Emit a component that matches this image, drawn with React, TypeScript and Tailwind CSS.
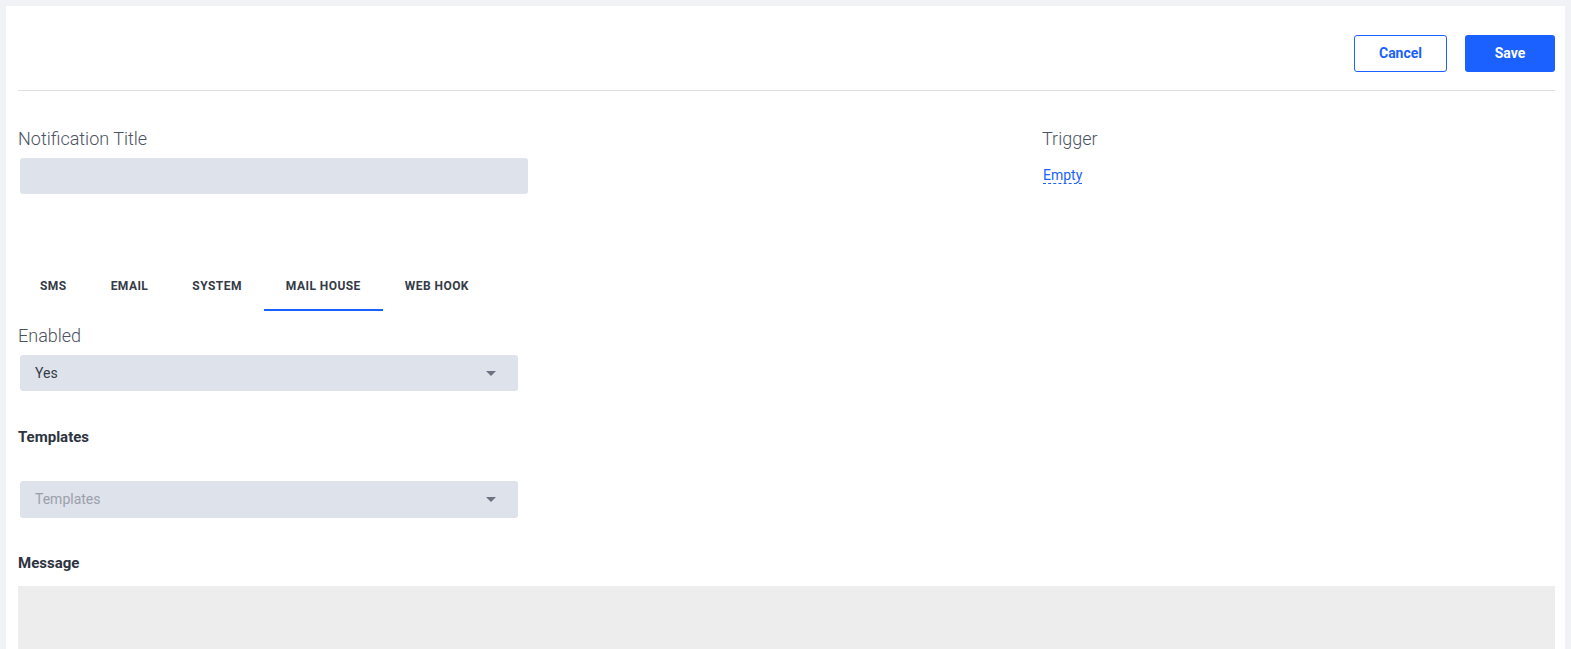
import { useState } from 'react';

const tabs = ['SMS', 'EMAIL', 'SYSTEM', 'MAIL HOUSE', 'WEB HOOK'];

function Caret() {
  return (
    <svg width="10" height="5" viewBox="0 0 10 5" className="shrink-0">
      <path d="M0 0h10L5 5z" fill="#6b7280" />
    </svg>
  );
}

export default function App() {
  const [active, setActive] = useState('MAIL HOUSE');

  return (
    <div className="min-h-screen bg-[#f1f2f5] px-[6px] pt-[6px] font-['Roboto',sans-serif]">
      <div className="bg-white pl-[12px] pr-[10px] min-h-[643px]">
        {/* Header actions */}
        <div className="flex justify-end gap-[18px] pt-[29px] pb-[18px] border-b border-[#dcdfe4]">
          <button className="w-[93px] h-[37px] rounded-[3px] border border-[#1b61ff] text-[#1b61ff] text-[14px] font-bold">
            Cancel
          </button>
          <button className="w-[90px] h-[37px] rounded-[3px] bg-[#1b61ff] text-white text-[14px] font-bold">
            Save
          </button>
        </div>

        <div className="flex">
          <div className="w-[1024px]">
            <div className="mt-[36px] text-[18px] leading-[24px] font-light text-[#4b5261]">Notification Title</div>
            <div className="mt-[7px] ml-[2px] w-[508px] h-[36px] rounded-[3px] bg-[#dee2ea]" />
          </div>
          <div className="flex-1">
            <div className="mt-[36px] text-[18px] leading-[24px] font-light text-[#4b5261]">Trigger</div>
            <div className="mt-[14px] ml-[1px] text-[14px] leading-[20px]">
              <span className="text-[#1b61ff] border-b border-dashed border-[#1b61ff]">Empty</span>
            </div>
          </div>
        </div>

        {/* Channel tabs */}
        <div className="mt-[67px] flex">
          {tabs.map((t) => (
            <button
              key={t}
              onClick={() => setActive(t)}
              className={`px-[22px] pt-[17px] pb-[15px] text-[12px] leading-[16px] font-bold tracking-[0.45px] text-[#353b47] border-b-2 ${
                active === t ? 'border-[#1b61ff]' : 'border-transparent'
              }`}
            >
              {t}
            </button>
          ))}
        </div>

        <div className="mt-[13px] text-[18px] leading-[24px] font-light text-[#4b5261]">Enabled</div>
        <div className="mt-[7px] ml-[2px] w-[498px] h-[36px] rounded-[3px] bg-[#dee2ea] flex items-center justify-between pl-[15px] pr-[22px]">
          <span className="text-[14px] text-[#353b47]">Yes</span>
          <Caret />
        </div>

        <div className="mt-[36px] text-[15px] leading-[20px] font-bold text-[#2d3340]">Templates</div>
        <div className="mt-[34px] ml-[2px] w-[498px] h-[37px] rounded-[3px] bg-[#dee2ea] flex items-center justify-between pl-[15px] pr-[22px]">
          <span className="text-[14px] text-[#9aa0aa]">Templates</span>
          <Caret />
        </div>

        <div className="mt-[35px] text-[15px] leading-[20px] font-bold text-[#2d3340]">Message</div>
        <div className="mt-[13px] h-[200px] bg-[#ededed]" />
      </div>
    </div>
  );
}
